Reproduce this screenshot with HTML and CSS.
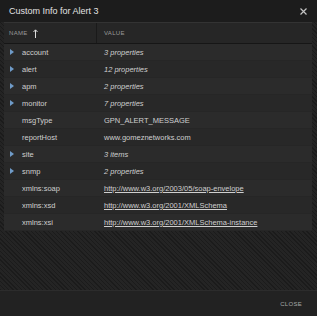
FILE: index.html
```html
<!DOCTYPE html>
<html lang="en">
<head>
    <meta charset="UTF-8">
    <title>Custom Info for Alert 3</title>
    <link rel="stylesheet" href="styles.css">
</head>
<body>
    <div class="dialog">
        <div class="title-bar">
            <span class="title">Custom Info for Alert 3</span>
            <svg class="close-x" width="7" height="7" viewBox="0 0 7 7"><path d="M0.5 0.5L6.5 6.5M6.5 0.5L0.5 6.5" stroke="#c4c4c4" stroke-width="1.2"/></svg>
        </div>
        <div class="body">
            <div class="grid">
                <div class="head">
                    <div class="cell name-col">NAME
                        <svg class="sort" width="5" height="9" viewBox="0 0 5 9"><path d="M2.5 9V1M0.5 3L2.5 0.8L4.5 3" fill="none" stroke="#dcdcdc" stroke-width="1"/></svg>
                    </div>
                    <div class="cell value-col">VALUE</div>
                </div>
                <div class="row"><div class="cell name-col"><span class="caret"></span>account</div><div class="cell value-col italic">3 properties</div></div>
                <div class="row"><div class="cell name-col"><span class="caret"></span>alert</div><div class="cell value-col italic">12 properties</div></div>
                <div class="row"><div class="cell name-col"><span class="caret"></span>apm</div><div class="cell value-col italic">2 properties</div></div>
                <div class="row"><div class="cell name-col"><span class="caret"></span>monitor</div><div class="cell value-col italic">7 properties</div></div>
                <div class="row"><div class="cell name-col"><span class="caret none"></span>msgType</div><div class="cell value-col">GPN_ALERT_MESSAGE</div></div>
                <div class="row"><div class="cell name-col"><span class="caret none"></span>reportHost</div><div class="cell value-col">www.gomeznetworks.com</div></div>
                <div class="row"><div class="cell name-col"><span class="caret"></span>site</div><div class="cell value-col italic">3 items</div></div>
                <div class="row"><div class="cell name-col"><span class="caret"></span>snmp</div><div class="cell value-col italic">2 properties</div></div>
                <div class="row"><div class="cell name-col"><span class="caret none"></span>xmlns:soap</div><div class="cell value-col"><a href="#">http://www.w3.org/2003/05/soap-envelope</a></div></div>
                <div class="row"><div class="cell name-col"><span class="caret none"></span>xmlns:xsd</div><div class="cell value-col"><a href="#">http://www.w3.org/2001/XMLSchema</a></div></div>
                <div class="row"><div class="cell name-col"><span class="caret none"></span>xmlns:xsi</div><div class="cell value-col"><a href="#">http://www.w3.org/2001/XMLSchema-instance</a></div></div>
            </div>
        </div>
        <div class="footer">
            <span class="close-btn">CLOSE</span>
        </div>
    </div>
</body>
</html>
```

FILE: styles.css
```css
:root {
    --title-bg: #1c1c1c;
    --head-bg: #262626;
    --row-a: #2b2b2b;
    --row-b: #282828;
    --footer-bg: #222222;
    --text: #cfcfcf;
    --muted: #9a9a9a;
    --caret: #6f9bc8;
}

* {
    box-sizing: border-box;
}

body {
    margin: 0;
    font-family: "Liberation Sans", Arial, sans-serif;
    background: #1a1a1a;
    color: var(--text);
}

.dialog {
    width: 317px;
    height: 316px;
    display: flex;
    flex-direction: column;
}

.title-bar {
    height: 22px;
    background: var(--title-bg);
    display: flex;
    align-items: center;
    justify-content: space-between;
    padding: 0 10px 0 9px;
}

.title {
    font-size: 9px;
    color: #e2e2e2;
}

.body {
    flex: 1;
    padding: 0 5px 0 4px;
    background: repeating-linear-gradient(45deg, #1b1b1b 0 1px, #242424 1px 3px);
}

.grid {
    display: flex;
    flex-direction: column;
}

.head {
    height: 22px;
    display: flex;
    align-items: center;
    background: var(--head-bg);
    border-top: 1px solid #333;
    border-bottom: 1px solid #161616;
    font-size: 6px;
    letter-spacing: 0.3px;
    color: var(--muted);
}

.head .name-col {
    border-right: 1px solid #1a1a1a;
    height: 100%;
    padding-left: 5px;
}

.sort {
    margin-left: 5px;
}

.row {
    height: 17px;
    display: flex;
    align-items: center;
    font-size: 7.5px;
    background: var(--row-a);
    border-bottom: 1px solid #262626;
}

.row:nth-of-type(odd) {
    background: var(--row-b);
}

.cell {
    display: flex;
    align-items: center;
}

.name-col {
    width: 93px;
    padding-left: 6px;
}

.value-col {
    padding-left: 7px;
}

.italic {
    font-style: italic;
}

.caret {
    width: 0;
    height: 0;
    border-top: 3px solid transparent;
    border-bottom: 3px solid transparent;
    border-left: 4px solid var(--caret);
    margin-right: 8px;
}

.caret.none {
    border-left-color: transparent;
}

a {
    color: var(--text);
}

.footer {
    height: 26px;
    background: var(--footer-bg);
    border-top: 1px solid #2c2c2c;
    display: flex;
    align-items: center;
    justify-content: flex-end;
    padding-right: 15px;
}

.close-btn {
    font-size: 6px;
    color: #a8a8a8;
    letter-spacing: 0.3px;
}
```
